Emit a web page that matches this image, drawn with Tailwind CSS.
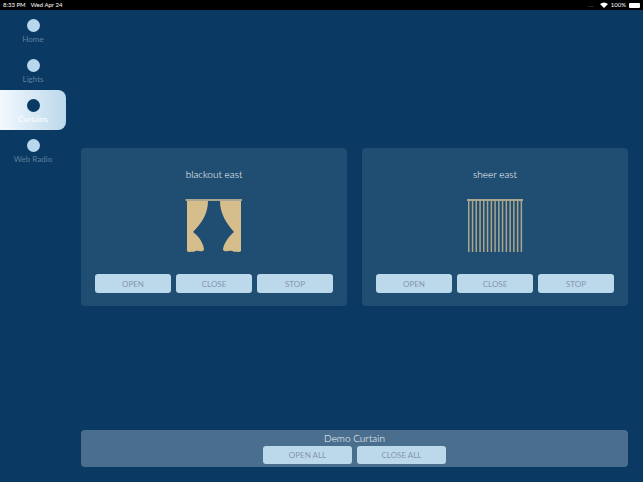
<!DOCTYPE html>
<html lang="en">
<head>
    <meta charset="UTF-8">
    <title>Curtains</title>
    <script src="https://cdn.jsdelivr.net/npm/@tailwindcss/browser@4"></script>
</head>
<body class="bg-[#0a3a63] font-['Lato',sans-serif]">
    <div class="w-[643px] h-[482px] flex flex-col overflow-hidden">
        <!-- Status bar -->
        <div class="h-[10px] bg-black text-white text-[6px] leading-[10px] flex justify-between items-center px-[3px] shrink-0">
            <div class="flex gap-[5px]"><span>8:33 PM</span><span>Wed Apr 24</span></div>
            <div class="flex items-center gap-[3px]">
                <span class="text-gray-500 mr-[3px]">....</span>
                <svg width="8" height="6" viewBox="0 0 8 6"><path d="M0 2 Q4 -1 8 2 L4 6 Z" fill="#fff"/></svg>
                <span>100%</span>
                <div class="w-[11px] h-[5px] bg-white rounded-[1px]"></div>
            </div>
        </div>

        <div class="flex flex-1">
            <!-- Sidebar -->
            <div class="w-[66px] shrink-0 flex flex-col">
                <div class="h-10 flex flex-col items-center pt-[9px]">
                    <div class="w-[13px] h-[13px] rounded-full bg-[#b9d7ec]"></div>
                    <span class="text-[8px] leading-[12px] mt-[1px] text-[#5f7f9c]">Home</span>
                </div>
                <div class="h-10 flex flex-col items-center pt-[9px]">
                    <div class="w-[13px] h-[13px] rounded-full bg-[#b9d7ec]"></div>
                    <span class="text-[8px] leading-[12px] mt-[1px] text-[#5f7f9c]">Lights</span>
                </div>
                <div class="h-10 flex flex-col items-center pt-[9px] rounded-r-lg bg-gradient-to-r from-[#f2f9fe] to-[#bcd9ec]">
                    <div class="w-[13px] h-[13px] rounded-full bg-[#0a3a63]"></div>
                    <span class="text-[8px] leading-[12px] mt-[1px] text-white">Curtains</span>
                </div>
                <div class="h-10 flex flex-col items-center pt-[9px]">
                    <div class="w-[13px] h-[13px] rounded-full bg-[#b9d7ec]"></div>
                    <span class="text-[8px] leading-[12px] mt-[1px] text-[#5f7f9c]">Web Radio</span>
                </div>
            </div>

            <!-- Main -->
            <div class="flex-1 px-[15px] pt-[138px] pb-[15px] flex flex-col justify-between">
                <div class="flex gap-[15px]">
                    <!-- Card 1 -->
                    <div class="w-[266px] h-[158px] bg-[#1f4e72] rounded px-[14px] flex flex-col items-center">
                        <div class="text-[10px] font-light leading-[14px] text-white mt-[19px]">blackout east</div>
                        <svg class="mt-[18px]" width="58" height="56" viewBox="0 0 58 56">
                            <rect x="0.5" y="0" width="56.5" height="2" fill="#a9a692"/>
                            <path d="M2 2 H23 C23 14 17 24 8 33 C15 38 19 46 19 51 C16 54 12 50 9 53 C7 52 4 54 2 52 Z" fill="#d5bd8c"/>
                            <path d="M56 2 H35 C35 14 41 24 49 33 C43 38 38 46 38 51 C41 54 45 50 49 53 C51 52 54 54 56 52 Z" fill="#d5bd8c"/>
                        </svg>
                        <div class="flex gap-[5px] mt-[19px] w-full">
                            <button class="flex-1 h-[19px] bg-[#bcd9ec] rounded-[3px] text-[8px] text-[#8496ac]">OPEN</button>
                            <button class="flex-1 h-[19px] bg-[#bcd9ec] rounded-[3px] text-[8px] text-[#8496ac]">CLOSE</button>
                            <button class="flex-1 h-[19px] bg-[#bcd9ec] rounded-[3px] text-[8px] text-[#8496ac]">STOP</button>
                        </div>
                    </div>
                    <!-- Card 2 -->
                    <div class="w-[266px] h-[158px] bg-[#1f4e72] rounded px-[14px] flex flex-col items-center">
                        <div class="text-[10px] font-light leading-[14px] text-white mt-[19px]">sheer east</div>
                        <svg class="mt-[18px]" width="58" height="56" viewBox="0 0 58 56">
                            <rect x="1" y="0" width="56" height="2" fill="#a9a692"/>
                            <g fill="#aca58a">
                                <rect x="2" y="2" width="1.5" height="51"/>
                                <rect x="5.8" y="2" width="1.5" height="51"/>
                                <rect x="9.5" y="2" width="1.5" height="51"/>
                                <rect x="13.3" y="2" width="1.5" height="51"/>
                                <rect x="17" y="2" width="1.5" height="51"/>
                                <rect x="20.8" y="2" width="1.5" height="51"/>
                                <rect x="24.6" y="2" width="1.5" height="51"/>
                                <rect x="28.3" y="2" width="1.5" height="51"/>
                                <rect x="32.1" y="2" width="1.5" height="51"/>
                                <rect x="35.8" y="2" width="1.5" height="51"/>
                                <rect x="39.6" y="2" width="1.5" height="51"/>
                                <rect x="43.4" y="2" width="1.5" height="51"/>
                                <rect x="47.1" y="2" width="1.5" height="51"/>
                                <rect x="50.9" y="2" width="1.5" height="51"/>
                                <rect x="54.6" y="2" width="1.5" height="51"/>
                            </g>
                        </svg>
                        <div class="flex gap-[5px] mt-[19px] w-full">
                            <button class="flex-1 h-[19px] bg-[#bcd9ec] rounded-[3px] text-[8px] text-[#8496ac]">OPEN</button>
                            <button class="flex-1 h-[19px] bg-[#bcd9ec] rounded-[3px] text-[8px] text-[#8496ac]">CLOSE</button>
                            <button class="flex-1 h-[19px] bg-[#bcd9ec] rounded-[3px] text-[8px] text-[#8496ac]">STOP</button>
                        </div>
                    </div>
                </div>

                <!-- Group bar -->
                <div class="w-[547px] h-[37px] bg-[#4a6f8e] rounded flex flex-col items-center pt-[1px]">
                    <div class="text-[10px] font-light leading-[14px] text-white">Demo Curtain</div>
                    <div class="flex gap-[5px] mt-[1px]">
                        <button class="w-[89px] h-[18px] bg-[#bcd9ec] rounded-[3px] text-[8px] text-[#8496ac]">OPEN ALL</button>
                        <button class="w-[89px] h-[18px] bg-[#bcd9ec] rounded-[3px] text-[8px] text-[#8496ac]">CLOSE ALL</button>
                    </div>
                </div>
            </div>
        </div>
    </div>
</body>
</html>
